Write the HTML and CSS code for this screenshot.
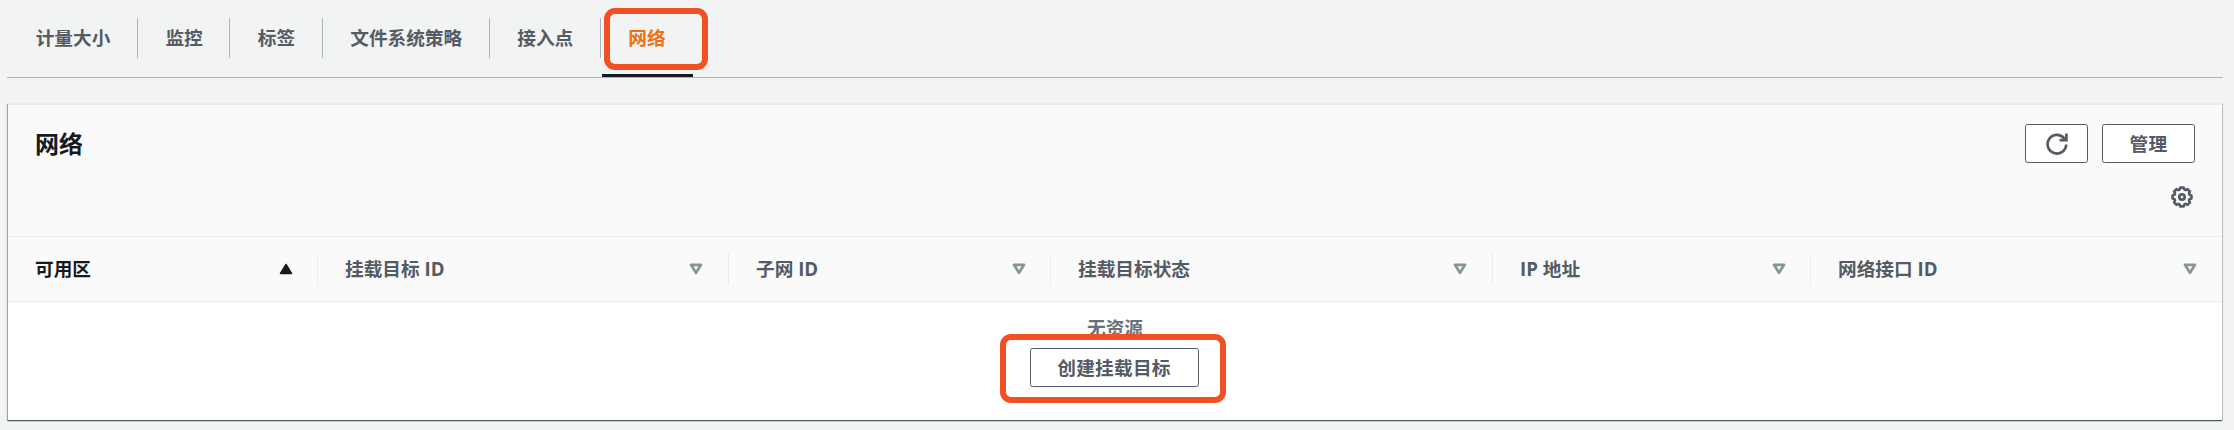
FILE: index.html
```html
<!DOCTYPE html>
<html lang="zh-CN">
<head>
<meta charset="utf-8">
<title>网络</title>
<link rel="stylesheet" href="styles.css">
</head>
<body>
<nav class="tabs">
  <a class="tab"><span>计量大小</span></a>
  <a class="tab"><span>监控</span></a>
  <a class="tab"><span>标签</span></a>
  <a class="tab"><span>文件系统策略</span></a>
  <a class="tab"><span>接入点</span></a>
  <a class="tab active"><span>网络</span><i class="highlight tab-highlight"></i></a>
</nav>
<main class="panel">
  <header class="panel-header">
    <h2>网络</h2>
    <div class="tools">
      <div class="actions">
        <button class="btn icon-btn" aria-label="刷新">
          <svg width="22" height="22" viewBox="0 0 22 22" fill="none" stroke="#545b64" stroke-width="2.7"><path d="M20.2 11.5A9.3 9.3 0 1 1 18 5.2L19.8 7"/><path d="M13.6 7.2h6.8V.5"/></svg>
        </button>
        <button class="btn">管理</button>
      </div>
      <svg class="gear" width="22" height="22" viewBox="0 0 22 22" fill="none" stroke="#545b64" stroke-width="2.7" stroke-linejoin="round"><path d="M9.3 1.6h3.4l.7 2 1.2.5 1.9-.9 2.4 2.4-.9 1.9.5 1.2 1.9.7v3.2l-1.9.7-.5 1.2.9 1.9-2.4 2.4-1.9-.9-1.2.5-.7 2H9.3l-.7-2-1.2-.5-1.9.9-2.4-2.4.9-1.9-.5-1.2-1.9-.7V9.4l1.9-.7.5-1.2-.9-1.9 2.4-2.4 1.9.9 1.2-.5z"/><circle cx="11" cy="11" r="2.7"/></svg>
    </div>
  </header>
  <div class="columns">
    <div class="col sorted"><span>可用区</span><svg width="14" height="12" viewBox="0 0 14 12"><path d="M7 1.5 12.5 10.5h-11z" fill="#16191f" stroke="#16191f" stroke-width="1.5" stroke-linejoin="round"/></svg></div>
    <div class="col"><span>挂载目标 ID</span><svg width="14" height="12" viewBox="0 0 14 12"><path class="tri" d="M2 1.8h10L7 9.8z"/></svg></div>
    <div class="col"><span>子网 ID</span><svg width="14" height="12" viewBox="0 0 14 12"><path class="tri" d="M2 1.8h10L7 9.8z"/></svg></div>
    <div class="col"><span>挂载目标状态</span><svg width="14" height="12" viewBox="0 0 14 12"><path class="tri" d="M2 1.8h10L7 9.8z"/></svg></div>
    <div class="col"><span>IP 地址</span><svg width="14" height="12" viewBox="0 0 14 12"><path class="tri" d="M2 1.8h10L7 9.8z"/></svg></div>
    <div class="col"><span>网络接口 ID</span><svg width="14" height="12" viewBox="0 0 14 12"><path class="tri" d="M2 1.8h10L7 9.8z"/></svg></div>
  </div>
  <section class="empty">
    <p>无资源</p>
    <div class="create"><button class="btn">创建挂载目标</button><i class="highlight create-highlight"></i></div>
  </section>
</main>
</body>
</html>
```
FILE: styles.css
```css
* { box-sizing: border-box; }
body {
  margin: 0;
  height: 430px;
  overflow: hidden;
  background: #f2f3f3;
  color: #545b64;
  font: bold 18.67px/28px "Open Sans", "Noto Sans CJK SC", sans-serif;
}
.tabs {
  display: flex;
  height: 78px;
  margin: 0 11px 0 7px;
  padding: 18px 0 0 2px;
  border-bottom: 1px solid #aab7b8;
}
.tab {
  position: relative;
  height: 59px;
}
.tab span {
  display: block;
  height: 40px;
  padding: 0 26.67px;
  border-right: 1px solid #aab7b8;
  margin-right: .8px;
  line-height: 40px;
}
.tab.active {
  color: #ec7211;
  border-bottom: 3px solid #16191f;
}
.tab.active span {
  width: 64px;
  margin-right: 27px;
  padding-right: 0;
  border-right: 0;
  white-space: nowrap;
}
.highlight {
  position: absolute;
  border: 6px solid #f05023;
  border-radius: 11px;
}
.tab-highlight { left: 2px; top: -10px; width: 104px; height: 62px; }
.panel {
  margin: 25px 12px 0 8px;
  height: 317px;
  background: #fff;
  border-top: 2px solid #e8ebeb;
  box-shadow: 0 1px 1px 0 rgba(0,28,36,.5), 1px 1px 1px 0 rgba(0,28,36,.15), -1px 1px 1px 0 rgba(0,28,36,.3);
}
.panel-header {
  display: flex;
  justify-content: space-between;
  height: 132px;
  padding: 19px 27px 0;
  background: #fafafa;
  border-bottom: 1px solid #eaeded;
}
h2 { margin: 3px 0 0; font-size: 24px; line-height: 34px; color: #16191f; }
.tools { display: flex; flex-direction: column; align-items: flex-end; }
.actions { display: flex; gap: 14px; }
.btn {
  display: flex;
  align-items: center;
  justify-content: center;
  height: 39px;
  padding: 0;
  background: #fff;
  border: 1px solid #545b64;
  border-radius: 2.67px;
  color: #545b64;
  font: inherit;
  letter-spacing: .25px;
  white-space: nowrap;
}
.actions .btn { width: 93px; }
.actions .icon-btn { width: 63px; }
.gear { margin: 23px 2px 0 0; }
.columns {
  display: grid;
  grid-template-columns: 310px 411px 322px 442px 318px 1fr;
  height: 65px;
  padding: 16px 0;
  background: #fafafa;
  border-bottom: 1px solid #eaeded;
}
.col {
  display: flex;
  align-items: center;
  justify-content: space-between;
  padding: 0 25px 0 27px;
  border-right: 1px solid #eaeded;
}
.col:nth-child(odd) { padding-right: 24px; }
.col:last-child { border-right: 0; padding-right: 25px; }
.col svg { margin-top: -1px; }
.sorted { color: #16191f; }
.tri { fill: none; stroke: #879596; stroke-width: 2.7; stroke-linejoin: round; }
.empty { display: flex; flex-direction: column; align-items: center; padding-top: 12px; }
.empty p { margin: 0 0 6px; color: #687078; }
.create { position: relative; margin-right: 2px; }
.create .btn { width: 169px; }
.create-highlight { left: -30px; top: -14px; width: 226px; height: 69px; }
```
